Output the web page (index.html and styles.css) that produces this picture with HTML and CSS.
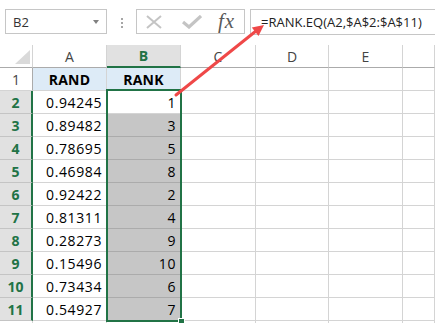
FILE: index.html
```html
<!DOCTYPE html>
<html lang="en">
<head>
  <meta charset="UTF-8">
  <title>RANK.EQ</title>
  <link rel="stylesheet" href="styles.css">
</head>
<body>
  <div class="formula-bar">
    <div class="name-box">
      <span>B2</span>
      <span class="caret"></span>
    </div>
    <div class="grip"><i></i><i></i><i></i></div>
    <div class="fx-tools">
      <svg class="tool-x" viewBox="0 0 16 14" width="16" height="14">
        <path d="M1 1L15 13M15 1L1 13" />
      </svg>
      <svg class="tool-check" viewBox="0 0 20 14" width="20" height="14">
        <path d="M1 7L7 12L19 1" />
      </svg>
      <span class="fx">fx</span>
    </div>
    <div class="formula">=RANK.EQ(A2,$A$2:$A$11)</div>
  </div>

  <div class="sheet">
    <div class="corner"></div>
    <div class="col-head">A</div>
    <div class="col-head active">B</div>
    <div class="col-head">C</div>
    <div class="col-head">D</div>
    <div class="col-head">E</div>
    <div class="col-head"></div>

    <div class="row-head">1</div>
    <div class="cell title">RAND</div>
    <div class="cell title">RANK</div>
    <div class="cell"></div><div class="cell"></div><div class="cell"></div><div class="cell"></div>

    <div class="row-head active">2</div>
    <div class="cell num">0.94245</div>
    <div class="cell num">1</div>
    <div class="cell"></div><div class="cell"></div><div class="cell"></div><div class="cell"></div>

    <div class="row-head active">3</div>
    <div class="cell num">0.89482</div>
    <div class="cell num picked">3</div>
    <div class="cell"></div><div class="cell"></div><div class="cell"></div><div class="cell"></div>

    <div class="row-head active">4</div>
    <div class="cell num">0.78695</div>
    <div class="cell num picked">5</div>
    <div class="cell"></div><div class="cell"></div><div class="cell"></div><div class="cell"></div>

    <div class="row-head active">5</div>
    <div class="cell num">0.46984</div>
    <div class="cell num picked">8</div>
    <div class="cell"></div><div class="cell"></div><div class="cell"></div><div class="cell"></div>

    <div class="row-head active">6</div>
    <div class="cell num">0.92422</div>
    <div class="cell num picked">2</div>
    <div class="cell"></div><div class="cell"></div><div class="cell"></div><div class="cell"></div>

    <div class="row-head active">7</div>
    <div class="cell num">0.81311</div>
    <div class="cell num picked">4</div>
    <div class="cell"></div><div class="cell"></div><div class="cell"></div><div class="cell"></div>

    <div class="row-head active">8</div>
    <div class="cell num">0.28273</div>
    <div class="cell num picked">9</div>
    <div class="cell"></div><div class="cell"></div><div class="cell"></div><div class="cell"></div>

    <div class="row-head active">9</div>
    <div class="cell num">0.15496</div>
    <div class="cell num picked">10</div>
    <div class="cell"></div><div class="cell"></div><div class="cell"></div><div class="cell"></div>

    <div class="row-head active">10</div>
    <div class="cell num">0.73434</div>
    <div class="cell num picked">6</div>
    <div class="cell"></div><div class="cell"></div><div class="cell"></div><div class="cell"></div>

    <div class="row-head active">11</div>
    <div class="cell num">0.54927</div>
    <div class="cell num picked">7</div>
    <div class="cell"></div><div class="cell"></div><div class="cell"></div><div class="cell"></div>

    <div class="row-head blank"></div>
    <div class="cell"></div><div class="cell"></div><div class="cell"></div>
    <div class="cell"></div><div class="cell"></div><div class="cell"></div>

    <div class="selection"><span class="handle"></span></div>
  </div>

  <svg class="arrow" viewBox="0 0 435 323" width="435" height="323">
    <line x1="176" y1="95" x2="256" y2="31" />
    <polygon points="264,25 258.5,36 251.8,27.6" />
  </svg>
</body>
</html>
```

FILE: styles.css
```css
:root {
	--grid: #d4d4d4;
	--head-line: #ababab;
	--green: #217346;
	--picked: #c6c6c6;
}

* {
	box-sizing: border-box;
}

body {
	margin: 0;
	width: 435px;
	height: 323px;
	overflow: hidden;
	background: #fff;
	font-family: "Open Sans", "Liberation Sans", sans-serif;
	position: relative;
}

/* formula bar */

.formula-bar {
	display: flex;
	align-items: flex-start;
	height: 45px;
	padding-top: 9px;
}

.formula-bar > * {
	flex-shrink: 0;
}

.name-box {
	display: flex;
	align-items: center;
	justify-content: space-between;
	width: 102px;
	height: 25px;
	margin-left: 5px;
	padding: 0 7px 0 7px;
	border: 1px solid #c6c6c6;
	font-size: 13px;
	color: #333;
}

.caret {
	width: 0;
	height: 0;
	border-left: 3px solid transparent;
	border-right: 3px solid transparent;
	border-top: 4px solid #808080;
}

.grip {
	display: flex;
	flex-direction: column;
	gap: 2px;
	margin: 9px 0 0 14px;
}

.grip i {
	width: 2px;
	height: 2px;
	background: #a6a6a6;
}

.fx-tools {
	display: flex;
	align-items: center;
	width: 109px;
	height: 25px;
	margin-left: 13px;
	padding-left: 9px;
	border: 1px solid #c6c6c6;
}

.fx-tools svg {
	fill: none;
	stroke: #c4c4c4;
}

.tool-x {
	stroke-width: 2;
}

.tool-check {
	margin-left: 20px;
	stroke-width: 3.2;
}

.fx {
	margin-left: 16px;
	font-family: "Liberation Serif", serif;
	font-style: italic;
	font-size: 21px;
	letter-spacing: 1px;
	color: #5a5a5a;
	line-height: 1;
}

.formula {
	width: 200px;
	height: 26px;
	margin-left: 5px;
	padding-left: 10px;
	border: 1px solid #c6c6c6;
	font-size: 13px;
	line-height: 24px;
	color: #222;
	white-space: nowrap;
}

/* sheet grid */

.sheet {
	display: grid;
	grid-template-columns: 33px 74px 74px 75px 73px 74px 32px;
	grid-template-rows: repeat(12, 23px) 3px;
	position: relative;
}

.corner {
	position: relative;
	border-right: 1px solid var(--grid);
	border-bottom: 1px solid var(--head-line);
}

.corner::after {
	content: "";
	position: absolute;
	right: 2px;
	bottom: 3px;
	width: 15px;
	height: 14px;
	background: #dadada;
	clip-path: polygon(100% 0, 100% 100%, 0 100%);
}

.col-head {
	display: flex;
	align-items: center;
	justify-content: center;
	border-right: 1px solid var(--grid);
	border-bottom: 1px solid var(--head-line);
	font-size: 14px;
	color: #444;
}

.col-head.active {
	background: #e1e1e1;
	border-bottom: 2px solid var(--green);
	color: var(--green);
	font-weight: 700;
}

.row-head {
	display: flex;
	align-items: center;
	justify-content: center;
	border-right: 1px solid var(--head-line);
	border-bottom: 1px solid var(--grid);
	font-size: 14px;
	color: #444;
}

.row-head.active {
	background: #e1e1e1;
	border-right: 2px solid var(--green);
	border-bottom-color: #c4c4c4;
	color: var(--green);
	font-weight: 700;
}

.row-head.blank {
	border-right-color: var(--grid);
}

.cell {
	display: flex;
	align-items: center;
	border-right: 1px solid var(--grid);
	border-bottom: 1px solid var(--grid);
	font-size: 14px;
	letter-spacing: 0.6px;
	color: #000;
}

.cell.title {
	justify-content: center;
	background: #ddebf7;
	font-weight: 700;
	letter-spacing: 0.2px;
}

.cell.num {
	justify-content: flex-end;
	padding-right: 4px;
}

.cell.picked {
	background: var(--picked);
	border-bottom-color: #ababab;
}

/* B2:B11 selection frame, drawn over the cells */
.selection {
	position: absolute;
	grid-column: 3 / 4;
	grid-row: 3 / 13;
	top: -2px;
	left: -1px;
	right: -1px;
	bottom: -1px;
	border: 2px solid var(--green);
}

.handle {
	position: absolute;
	right: -5px;
	bottom: -5px;
	width: 7px;
	height: 7px;
	background: var(--green);
	border: 1px solid #fff;
}

/* call-out arrow */

.arrow {
	position: absolute;
	top: 0;
	left: 0;
	pointer-events: none;
}

.arrow line {
	stroke: #ef4848;
	stroke-width: 3;
	stroke-linecap: round;
}

.arrow polygon {
	fill: #ef4848;
}
```
